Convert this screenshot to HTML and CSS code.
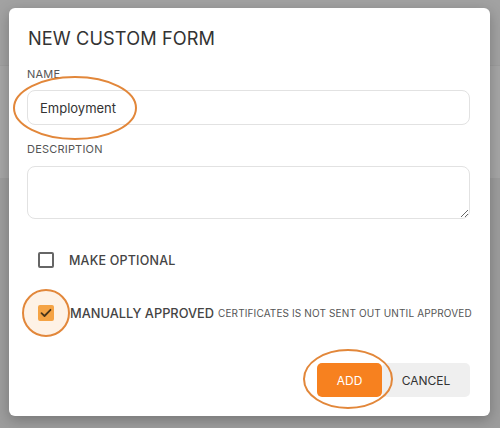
FILE: index.html
```html
<!doctype html>
<html lang="en">
<head>
    <meta charset="UTF-8">
    <meta name="viewport" content="width=device-width, initial-scale=1.0">
    <title>New custom form</title>
    <link rel="stylesheet" href="styles.css">
</head>
<body>
    <div class="backdrop">
        <div class="band band-top"></div>
        <div class="band band-mid"></div>
        <div class="modal">
            <h1 class="title">NEW CUSTOM FORM</h1>
            <label class="field-label" for="name">NAME</label>
            <input class="field" type="text" id="name" value="Employment">
            <label class="field-label" for="desc">DESCRIPTION</label>
            <textarea class="field field-area" id="desc"></textarea>
            <div class="check-row first">
                <span class="box"></span>
                <span class="check-text">MAKE OPTIONAL</span>
            </div>
            <div class="check-row second">
                <span class="box checked">
                    <svg width="12" height="10" viewBox="0 0 12 10"><path d="M1.5 5.2 L4.5 8 L10.5 1.8" fill="none" stroke="#2e2312" stroke-width="1.8" stroke-linecap="round" stroke-linejoin="round"/></svg>
                </span>
                <span class="check-text">MANUALLY APPROVED</span>
                <span class="hint">CERTIFICATES IS NOT SENT OUT UNTIL APPROVED</span>
            </div>
            <div class="actions">
                <button class="btn btn-add">ADD</button>
                <button class="btn btn-cancel">CANCEL</button>
            </div>
        </div>
        <svg class="marks" width="500" height="428" viewBox="0 0 500 428">
            <ellipse cx="75" cy="108" rx="61" ry="31" fill="none" stroke="#e2873a" stroke-width="2"/>
            <circle cx="46" cy="313" r="23" fill="rgba(247,160,80,0.14)" stroke="#e2873a" stroke-width="2"/>
            <ellipse cx="348" cy="379" rx="44" ry="29" fill="none" stroke="#e2873a" stroke-width="2"/>
        </svg>
    </div>
</body>
</html>
```

FILE: styles.css
```css
body {
    margin: 0;
    font-family: Inter, "Noto Sans", sans-serif;
}
.backdrop {
    position: relative;
    width: 500px;
    height: 428px;
    background-color: #9d9d9d;
    padding: 8px 10px 12px 9px;
    box-sizing: border-box;
    overflow: hidden;
}
.band {
    position: absolute;
    left: 0;
    right: 0;
    background: #a6a6a6;
}
.band-top {
    top: 0;
    height: 65px;
    background: #a2a2a2;
}
.band-mid {
    top: 66px;
    height: 112px;
}
.modal {
    position: relative;
    background: white;
    border-radius: 6px;
    height: 408px;
    box-sizing: border-box;
    padding: 18px 20px 19px 18px;
    box-shadow: 0 4px 14px rgba(0, 0, 0, 0.25);
    display: flex;
    flex-direction: column;
}
.title {
    margin: 0 0 0 1px;
    font-size: 18.2px;
    line-height: 24px;
    font-weight: 400;
    color: #333;
    letter-spacing: 0.1px;
}
.field-label {
    display: block;
    margin-top: 17px;
    font-size: 11px;
    line-height: 14px;
    color: #555;
    font-weight: 400;
    letter-spacing: 0.2px;
}
.field {
    margin-top: 9px;
    height: 35px;
    box-sizing: border-box;
    border: 1px solid #e2e2e2;
    border-radius: 8px;
    padding: 0 12px;
    font-family: inherit;
    font-size: 13px;
    color: #333;
    outline: none;
}
.field-area {
    margin-top: 10px;
    height: 53px;
    padding: 8px 12px;
}
.check-row {
    display: flex;
    align-items: center;
    height: 16px;
    padding-left: 11px;
    white-space: nowrap;
}
.check-row.first {
    margin-top: 33px;
}
.check-row.second {
    margin-top: 37px;
}
.box {
    flex-shrink: 0;
    width: 16px;
    height: 16px;
    box-sizing: border-box;
    border: 2px solid #666;
    border-radius: 2px;
    margin-right: 15px;
    display: flex;
    align-items: center;
    justify-content: center;
}
.box.checked {
    background: #f5a443;
    border-color: #f5a443;
    margin-right: 16px;
}
.check-text {
    font-size: 12.5px;
    font-weight: 500;
    color: #444;
    letter-spacing: 0.2px;
}
.second .check-text {
    font-size: 12.8px;
    letter-spacing: 0;
}
.hint {
    margin-left: 4px;
    font-size: 10px;
    color: #555;
    letter-spacing: 0.13px;
}
.actions {
    margin-top: 42px;
    display: flex;
    justify-content: flex-end;
}
.btn {
    height: 34px;
    border: none;
    border-radius: 5px;
    font-family: inherit;
    font-size: 12px;
    cursor: pointer;
}
.btn-add {
    width: 65px;
    background-color: #f7811f;
    color: white;
}
.btn-cancel {
    width: 88px;
    background-color: #efefef;
    color: #333;
}
.marks {
    position: absolute;
    left: 0;
    top: 0;
    pointer-events: none;
}
```
